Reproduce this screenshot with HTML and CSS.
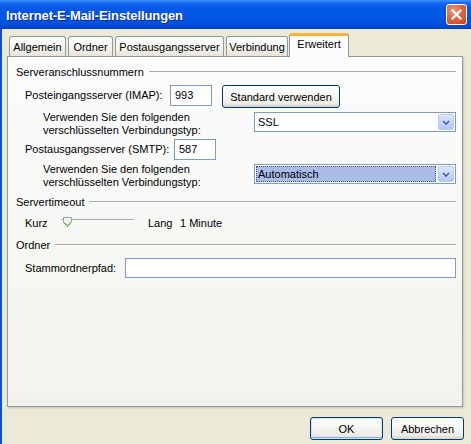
FILE: index.html
```html
<!DOCTYPE html>
<html lang="de">
<head>
<meta charset="utf-8">
<title>Internet-E-Mail-Einstellungen</title>
<link rel="stylesheet" href="styles.css">
</head>
<body>
<div class="window">
  <div class="titlebar">
    <span class="title">Internet-E-Mail-Einstellungen</span>
    <span class="close">
      <svg width="21" height="21" viewBox="0 0 21 21">
        <path d="M6.5 6.5 L14.5 14.5 M14.5 6.5 L6.5 14.5" stroke="#fff" stroke-width="2.2" stroke-linecap="square" fill="none"/>
      </svg>
    </span>
  </div>
  <div class="client">
    <div class="tabs">
      <span class="tab t1">Allgemein</span>
      <span class="tab t2">Ordner</span>
      <span class="tab t3">Postausgangsserver</span>
      <span class="tab t4">Verbindung</span>
      <span class="tab tab-active t5">Erweitert</span>
    </div>
    <div class="panel">
      <div class="group-head g1"><span>Serveranschlussnummern</span><i class="rule"></i></div>
      <div class="row r-imap">
        <span class="lbl lbl-imap">Posteingangsserver (IMAP):</span>
        <span class="field port">993</span>
        <span class="btn btn-std">Standard verwenden</span>
      </div>
      <div class="row r-enc r-enc1">
        <span class="enc-text">Verwenden Sie den folgenden<br>verschlüsselten Verbindungstyp:</span>
        <span class="combo"><span class="combo-val">SSL</span><span class="drop"><svg width="8" height="5" viewBox="0 0 8 5"><path d="M1 1 L4 4 L7 1" stroke="#4D6185" stroke-width="1.6" fill="none"/></svg></span></span>
      </div>
      <div class="row r-smtp">
        <span class="lbl lbl-smtp">Postausgangsserver (SMTP):</span>
        <span class="field port">587</span>
      </div>
      <div class="row r-enc r-enc2">
        <span class="enc-text">Verwenden Sie den folgenden<br>verschlüsselten Verbindungstyp:</span>
        <span class="combo"><span class="combo-val combo-sel">Automatisch</span><span class="drop"><svg width="8" height="5" viewBox="0 0 8 5"><path d="M1 1 L4 4 L7 1" stroke="#4D6185" stroke-width="1.6" fill="none"/></svg></span></span>
      </div>
      <div class="group-head g2"><span>Servertimeout</span><i class="rule"></i></div>
      <div class="row r-slider">
        <span class="s-kurz">Kurz</span>
        <span class="track">
          <i class="track-line"></i>
          <svg class="thumb" width="9" height="10" viewBox="0 0 9 10"><path d="M0.5 0.5 H8.5 V5.5 L4.5 9.5 L0.5 5.5 Z" fill="#F3F3EE" stroke="#9AA39A"/><path d="M1.5 5.8 L4.5 8.6 L7.5 5.8" stroke="#3DBB3D" fill="none"/></svg>
        </span>
        <span class="s-lang">Lang</span>
        <span class="s-val">1 Minute</span>
      </div>
      <div class="group-head g3"><span>Ordner</span><i class="rule"></i></div>
      <div class="row r-path">
        <span class="lbl lbl-path">Stammordnerpfad:</span>
        <span class="field path"></span>
      </div>
    </div>
    <div class="buttons">
      <span class="btn btn-dlg btn-default">OK</span>
      <span class="btn btn-dlg">Abbrechen</span>
    </div>
  </div>
</div>
</body>
</html>
```
FILE: styles.css
```css
html, body {
  margin: 0;
  padding: 0;
}
body {
  width: 471px;
  height: 444px;
  overflow: hidden;
  font-family: "Liberation Sans", Arial, sans-serif;
  font-size: 11px;
  color: #000;
  background: #ECE9D8;
}
.window {
  display: flex;
  flex-direction: column;
  height: 444px;
  background: #ECE9D8;
}
.titlebar {
  flex: none;
  height: 29px;
  display: flex;
  align-items: center;
  padding-left: 6px;
  padding-right: 3px;
  background: linear-gradient(to bottom, #3D95FF 0px, #1769F0 3px, #0458E8 8px, #0055E5 20px, #004BD8 26px, #0A3FB8 29px);
}
.title {
  flex: 1;
  color: #fff;
  font-family: "Liberation Sans", Arial, sans-serif;
  font-weight: bold;
  font-size: 13px;
  letter-spacing: -0.1px;
  text-shadow: 1px 1px 0 #0A2A8A;
  padding-top: 1px;
}
.close {
  width: 21px;
  height: 21px;
  margin-right: 1px;
  margin-top: 0px;
  box-sizing: border-box;
  border: 1px solid #fff;
  border-radius: 3px;
  background: radial-gradient(circle at 35% 30%, #F09A7A 0%, #E0673F 45%, #C8431C 100%);
  display: flex;
  align-items: center;
  justify-content: center;
}
.close svg {
  margin: -1px;
}
.client {
  flex: 1;
  display: flex;
  flex-direction: column;
  border-left: 2px solid #0A50D8;
  padding-left: 5px;
  padding-right: 8px;
}
.tabs {
  position: relative;
  z-index: 2;
  margin-top: 7px;
  height: 21px;
  display: flex;
  align-items: flex-end;
  padding-left: 2px;
  gap: 2px;
}
.tab {
  box-sizing: border-box;
  height: 20px;
  margin-bottom: 1px;
  border: 1px solid #919B9C;
  border-bottom: none;
  border-radius: 3px 3px 0 0;
  background: linear-gradient(to bottom, #FFFFFF, #F3F2ED 60%, #E6E4DA);
  display: flex;
  align-items: center;
  justify-content: center;
  padding-top: 1px;
  white-space: nowrap;
}
.t1 { width: 57px; }
.t2 { width: 45px; }
.t3 { width: 109px; }
.t4 { width: 62px; }
.tab-active {
  width: 60px;
  height: 24px;
  margin-bottom: 0;
  margin-left: -1px;
  border-top: 3px solid #F7B23B;
  border-radius: 3px 3px 0 0;
  background: #FCFCFE;
  align-items: flex-start;
  padding-top: 2px;
}
.panel {
  position: relative;
  z-index: 1;
  box-sizing: border-box;
  height: 351px;
  margin-top: -1px;
  border: 1px solid #919B9C;
  background: linear-gradient(to bottom, #FCFCFE 0%, #F7F7F4 50%, #F3F2EE 100%);
  box-shadow: 1px 1px 0 #D0CEBF, 2px 2px 0 #E0DDCC;
  padding: 8px 6px 0 8px;
  display: flex;
  flex-direction: column;
}
.group-head {
  height: 14px;
  line-height: 14px;
  display: flex;
  align-items: center;
  white-space: nowrap;
}
.rule {
  flex: 1;
  height: 0;
  margin-left: 5px;
  border-top: 1px solid #A9A9A2;
  border-bottom: 1px solid #FFFFFF;
}
.g2 { margin-top: 6px; }
.g3 { margin-top: 8px; }
.row {
  display: flex;
  align-items: flex-start;
  padding-left: 9px;
  white-space: nowrap;
}
.lbl {
  line-height: 21px;
}
.lbl-imap { width: 145px; }
.lbl-smtp { width: 149px; }
.lbl-path { width: 100px; line-height: 20px; }
.field {
  box-sizing: border-box;
  height: 21px;
  border: 1px solid #7F9DB9;
  background: #fff;
  padding-left: 4px;
  line-height: 19px;
}
.port { width: 42px; }
.path { flex: 1; height: 20px; }
.r-imap { margin-top: 6px; height: 22px; }
.r-smtp { margin-top: 2px; height: 21px; }
.r-enc { height: 26px; }
.r-enc1 { margin-top: 4px; }
.r-enc2 { margin-top: 3px; }
.enc-text {
  width: 211px;
  margin-left: 18px;
  line-height: 13px;
}
.combo {
  flex: 1;
  box-sizing: border-box;
  height: 20px;
  margin-top: 1px;
  border: 1px solid #7F9DB9;
  background: #fff;
  display: flex;
  align-items: stretch;
  padding: 1px;
}
.combo-val {
  flex: 1;
  padding-left: 2px;
  line-height: 16px;
  margin-right: 2px;
}
.combo-sel {
  background: #A9BCEA;
  outline: 1px dotted #555;
  outline-offset: -1px;
}
.drop {
  width: 16px;
  box-sizing: border-box;
  border: 1px solid #B9CBF3;
  border-radius: 2px;
  background: linear-gradient(to bottom, #DCE6FD, #C2D3FC 60%, #B1C6F9);
  display: flex;
  align-items: center;
  justify-content: center;
}
.btn {
  box-sizing: border-box;
  border: 1px solid #003C74;
  border-radius: 3px;
  background: linear-gradient(to bottom, #FFFFFF 0%, #F7F7F4 40%, #ECEBE6 85%, #D6D0C5 100%);
  display: flex;
  align-items: center;
  justify-content: center;
}
.btn-std {
  width: 118px;
  height: 23px;
  margin-left: 10px;
}
.r-slider {
  margin-top: 7px;
  height: 14px;
  line-height: 14px;
  align-items: center;
}
.s-kurz { width: 36px; }
.track {
  position: relative;
  width: 73px;
  height: 14px;
}
.track-line {
  position: absolute;
  left: 0;
  right: 0;
  top: 3px;
  height: 0;
  border-top: 1px solid #A8A8A4;
  border-bottom: 1px solid #FFFFFF;
}
.thumb {
  position: absolute;
  left: 2px;
  top: 1px;
}
.s-lang { width: 32px; margin-left: 14px; }
.s-val { }
.r-path { margin-top: 6px; height: 20px; }
.buttons {
  margin-top: 10px;
  display: flex;
  justify-content: flex-end;
  gap: 8px;
  margin-right: -1px;
}
.btn-dlg {
  width: 73px;
  height: 23px;
}
.btn-default {
  box-shadow: inset 0 0 0 1px #CEE7FF, inset 0 -1px 0 1px #89ADE4;
}
```
